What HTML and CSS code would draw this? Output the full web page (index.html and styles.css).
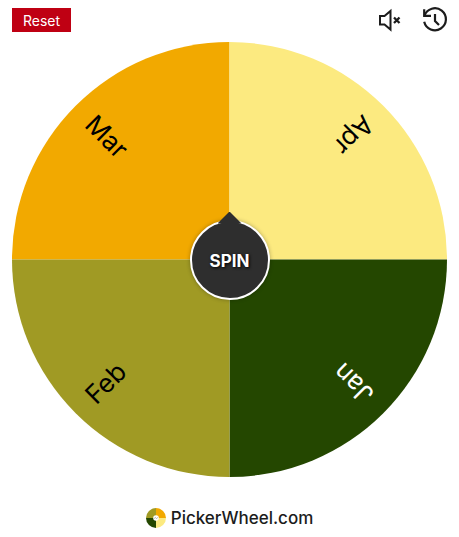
FILE: index.html
```html
<!DOCTYPE html>
<html lang="en">
<head>
<meta charset="utf-8">
<meta name="viewport" content="width=device-width, initial-scale=1">
<title>Picker Wheel</title>
<link rel="stylesheet" href="styles.css">
</head>
<body>
<header class="toolbar">
  <button class="reset" type="button">Reset</button>
  <div class="tools">
    <button class="tool" type="button" aria-label="Sound off">
      <svg class="icon" viewBox="0 0 24 24" fill="none" stroke="currentColor" stroke-width="2">
        <path d="M1 8v8.500h4.500l6 5V3l-6 5z"/>
        <path d="M15 9.500l5.500 5.500m0-5.500l-5.500 5.500" stroke-width="2.300"/>
      </svg>
    </button>
    <button class="tool" type="button" aria-label="History">
      <svg class="icon" viewBox="0 0 24 24" fill="none" stroke="currentColor" stroke-width="2.200">
        <path d="M1.200 1.200v6.700H8"/>
        <path d="M1.500 7.700A11 11 0 1 1 1.200 13.700"/>
        <path d="M12 6v7l4 4"/>
      </svg>
    </button>
  </div>
</header>
<main class="wheel">
  <svg class="disc" viewBox="-218 -218 436 436" role="img" aria-label="Wheel of months">
    <path fill="#f2a900" d="M0 0H-218A218 218 0 0 1 0-218z"/>
    <path fill="#fcea80" d="M0 0V-218A218 218 0 0 1 218 0z"/>
    <path fill="#244700" d="M0 0H218A218 218 0 0 1 0 218z"/>
    <path fill="#a09a24" d="M0 0V218A218 218 0 0 1-218 0z"/>
    <text class="label" transform="rotate(45)" x="-198" y="9">Mar</text>
    <text class="label" transform="rotate(135)" x="-198" y="9">Apr</text>
    <text class="label label-light" transform="rotate(225)" x="-198" y="9">Jan</text>
    <text class="label" transform="rotate(-45)" x="-198" y="9">Feb</text>
  </svg>
  <button class="spin" type="button">SPIN</button>
</main>
<footer class="brand">
  <svg class="logo" viewBox="-10 -10 20 20" aria-hidden="true">
    <path fill="#a09a24" d="M0 0H-10A10 10 0 0 1 0-10z"/>
    <path fill="#f2a900" d="M0 0V-10A10 10 0 0 1 10 0z"/>
    <path fill="#fcea80" d="M0 0H10A10 10 0 0 1 0 10z"/>
    <path fill="#244700" d="M0 0V10A10 10 0 0 1-10 0z"/>
    <circle r="2.800" fill="#fff"/>
    <path d="M-1.800 .5L-.7-.5L.5 .5L1.800-.5" fill="none" stroke="#999" stroke-width=".8"/>
  </svg>
  <span>PickerWheel.com</span>
</footer>
</body>
</html>
```
FILE: styles.css
```css
* { box-sizing: border-box; }

body {
  margin: 0;
  padding: 8px 12px;
  background: #fff;
  color: #1c1c1c;
  font-family: Inter, "Liberation Sans", sans-serif;
}

button {
  border: 0;
  padding: 0;
  font-family: inherit;
  cursor: pointer;
}

.toolbar {
  display: flex;
  justify-content: space-between;
  align-items: center;
}

.reset {
  height: 24px;
  padding: 0 11px;
  background: #bf0013;
  color: #fff;
  font-size: 14px;
  line-height: 26px;
}

.tools {
  display: flex;
  gap: 20px;
}

.tool {
  display: block;
  background: none;
  color: #1c1c1c;
}

.icon {
  display: block;
  width: 24px;
  height: 24px;
  overflow: visible;
}

.wheel {
  display: grid;
  place-items: center;
  margin-top: 10px;
}

.disc {
  grid-area: 1 / 1;
  display: block;
  width: 100%;
}

.label {
  font-size: 26px;
  fill: #000;
}

.label-light { fill: #fff; }

.spin {
  grid-area: 1 / 1;
  position: relative;
  width: 80px;
  height: 80px;
  border: 2px solid #fff;
  border-radius: 50%;
  background: #2e2e2e;
  box-shadow: 0 0 4px rgba(0, 0, 0, 0.3);
  color: #fff;
  font-size: 17px;
  font-weight: 700;
  padding-top: 2px;
  text-shadow: 1px 1px 3px #000;
}

.spin::before {
  content: "";
  position: absolute;
  top: -10px;
  left: 50%;
  width: 24px;
  height: 12px;
  margin-left: -12px;
  background: #2e2e2e;
  clip-path: polygon(50% 0, 100% 100%, 0 100%);
}

.brand {
  display: flex;
  justify-content: center;
  align-items: center;
  gap: 5px;
  margin-top: 30px;
  font-size: 17px;
  font-weight: 500;
  line-height: 22px;
}

.logo {
  width: 20px;
  height: 20px;
}
```
